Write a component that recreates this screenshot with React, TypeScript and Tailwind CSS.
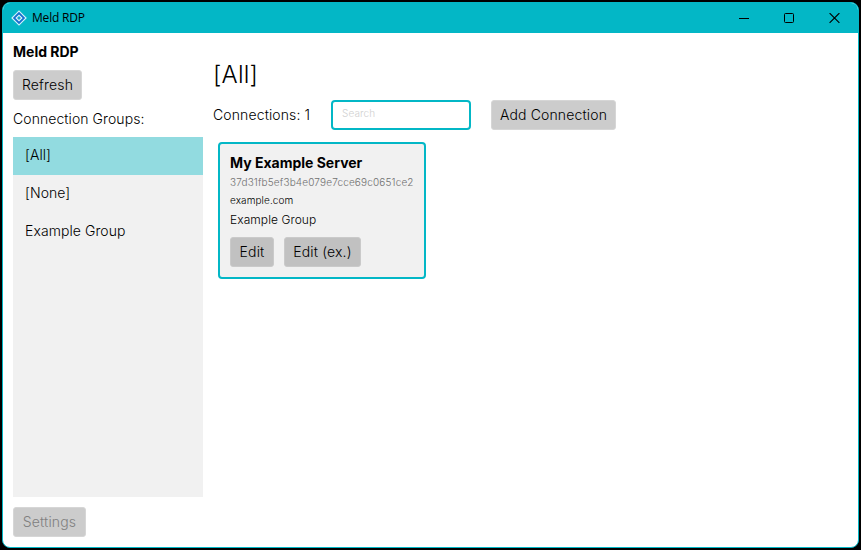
import React from 'react';

type ButtonProps = { label: string; className: string };

function Button({ label, className }: ButtonProps) {
  return (
    <button
      className={`flex h-[30px] shrink-0 items-center justify-center whitespace-nowrap rounded-[3px] border text-[14px] leading-[18px] tracking-[0.15px] ${className}`}
    >
      {label}
    </button>
  );
}

function TitleBar() {
  return (
    <header className="flex h-[30px] shrink-0 items-center bg-[#03b7c6]">
      <svg className="ml-[8px]" width="16" height="16" viewBox="0 0 16 16">
        <path d="M8 0.2 15.8 8 8 15.8 0.2 8z" fill="#d8f3fb" />
        <path d="M8 1.8 14.2 8 8 14.2 1.8 8z" fill="#1670cf" />
        <path d="M8 4.4 11.6 8 8 11.6 4.4 8z" fill="#e2f7fc" />
        <path d="M8 6 10 8 8 10 6 8z" fill="#16a6c8" />
      </svg>
      <span className="ml-[5px] font-['Open_Sans','Noto_Sans',sans-serif] text-[12px] font-normal leading-4 tracking-[-0.18px] text-black">
        Meld RDP
      </span>
      <div className="ml-auto mr-[18px] flex items-center gap-[35px]">
        <svg width="10" height="10" viewBox="0 0 10 10" stroke="#000">
          <path d="M0 5.5h10" />
        </svg>
        <svg width="10" height="10" viewBox="0 0 10 10" fill="none" stroke="#000">
          <rect x="0.5" y="0.5" width="9" height="9" rx="1" />
        </svg>
        <svg width="11" height="11" viewBox="0 0 11 11" stroke="#000" strokeWidth="1.15">
          <path d="M0.6 0.1l9.8 9.8M10.4 0.1l-9.8 9.8" />
        </svg>
      </div>
    </header>
  );
}

const groups = ['[All]', '[None]', 'Example Group'];

function Sidebar() {
  return (
    <aside className="flex w-[190px] shrink-0 flex-col">
      <h1 className="mt-[10px] text-[14px] font-bold leading-[18px]">Meld RDP</h1>
      <Button label="Refresh" className="mt-[9px] w-[69px] border-[#d6d6d6] bg-[#cccccc]" />
      <p className="mt-[10px] text-[14px] leading-[18px] tracking-[0.07px]">Connection Groups:</p>
      <ul className="mt-[9px] h-[360px] bg-[#f1f1f1]">
        {groups.map((group, i) => (
          <li
            key={group}
            className={`flex h-[38px] items-center pb-[2px] pl-3 text-[14px] leading-[18px] tracking-[0.07px] ${i === 0 ? 'bg-[#92dbe0]' : ''}`}
          >
            {group}
          </li>
        ))}
      </ul>
      <Button label="Settings" className="mt-[10px] w-[73px] border-[#d6d6d6] bg-[#cccccc] text-[#808080]" />
    </aside>
  );
}

function ConnectionCard() {
  return (
    <article className="ml-[5px] mt-3 flex h-[137px] w-[208px] flex-col rounded-[4px] border-2 border-[#03b7c6] bg-[#f1f1f1] pl-[10px]">
      <h3 className="mt-[10px] text-[14px] font-bold leading-[18px]">My Example Server</h3>
      <p className="mt-[3px] text-[10px] leading-[14px] tracking-[0.16px] text-[#707070]">37d31fb5ef3b4e079e7cce69c0651ce2</p>
      <p className="mt-[4px] text-[10px] leading-[14px] tracking-[0.09px]">example.com</p>
      <p className="mt-[5px] text-[12px] leading-[16px] tracking-[0.07px]">Example Group</p>
      <div className="mt-[9px] flex gap-[10px]">
        <Button label="Edit" className="w-[44px] border-[#cacaca] bg-[#c1c1c1]" />
        <Button label="Edit (ex.)" className="w-[77px] border-[#cacaca] bg-[#c1c1c1]" />
      </div>
    </article>
  );
}

export default function App() {
  return (
    <div className="h-[550px] w-[861px] overflow-hidden bg-black p-[2px] font-['Inter',sans-serif] font-light text-black">
      <div className="flex h-[546px] w-[857px] flex-col overflow-hidden rounded-[8px] border border-[#03b7c6] bg-white">
        <TitleBar />
        <div className="flex flex-1 gap-[10px] pl-[10px]">
          <Sidebar />
          <main className="flex flex-1 flex-col">
            <h2 className="mt-[27px] text-[24px] leading-[30px] tracking-[0.2px]">[All]</h2>
            <div className="mt-[10px] flex items-center">
              <span className="w-[118px] text-[14px] leading-[18px] tracking-[0.12px]">Connections: 1</span>
              <input
                placeholder="Search"
                className="h-[30px] w-[140px] rounded-[4px] border-2 border-[#03b7c6] bg-white pb-1 pl-[9px] text-[10px] tracking-[0.12px] outline-none placeholder:text-[#d0d0d0]"
              />
              <Button label="Add Connection" className="ml-5 w-[125px] border-[#d6d6d6] bg-[#cccccc]" />
            </div>
            <ConnectionCard />
          </main>
        </div>
      </div>
    </div>
  );
}
